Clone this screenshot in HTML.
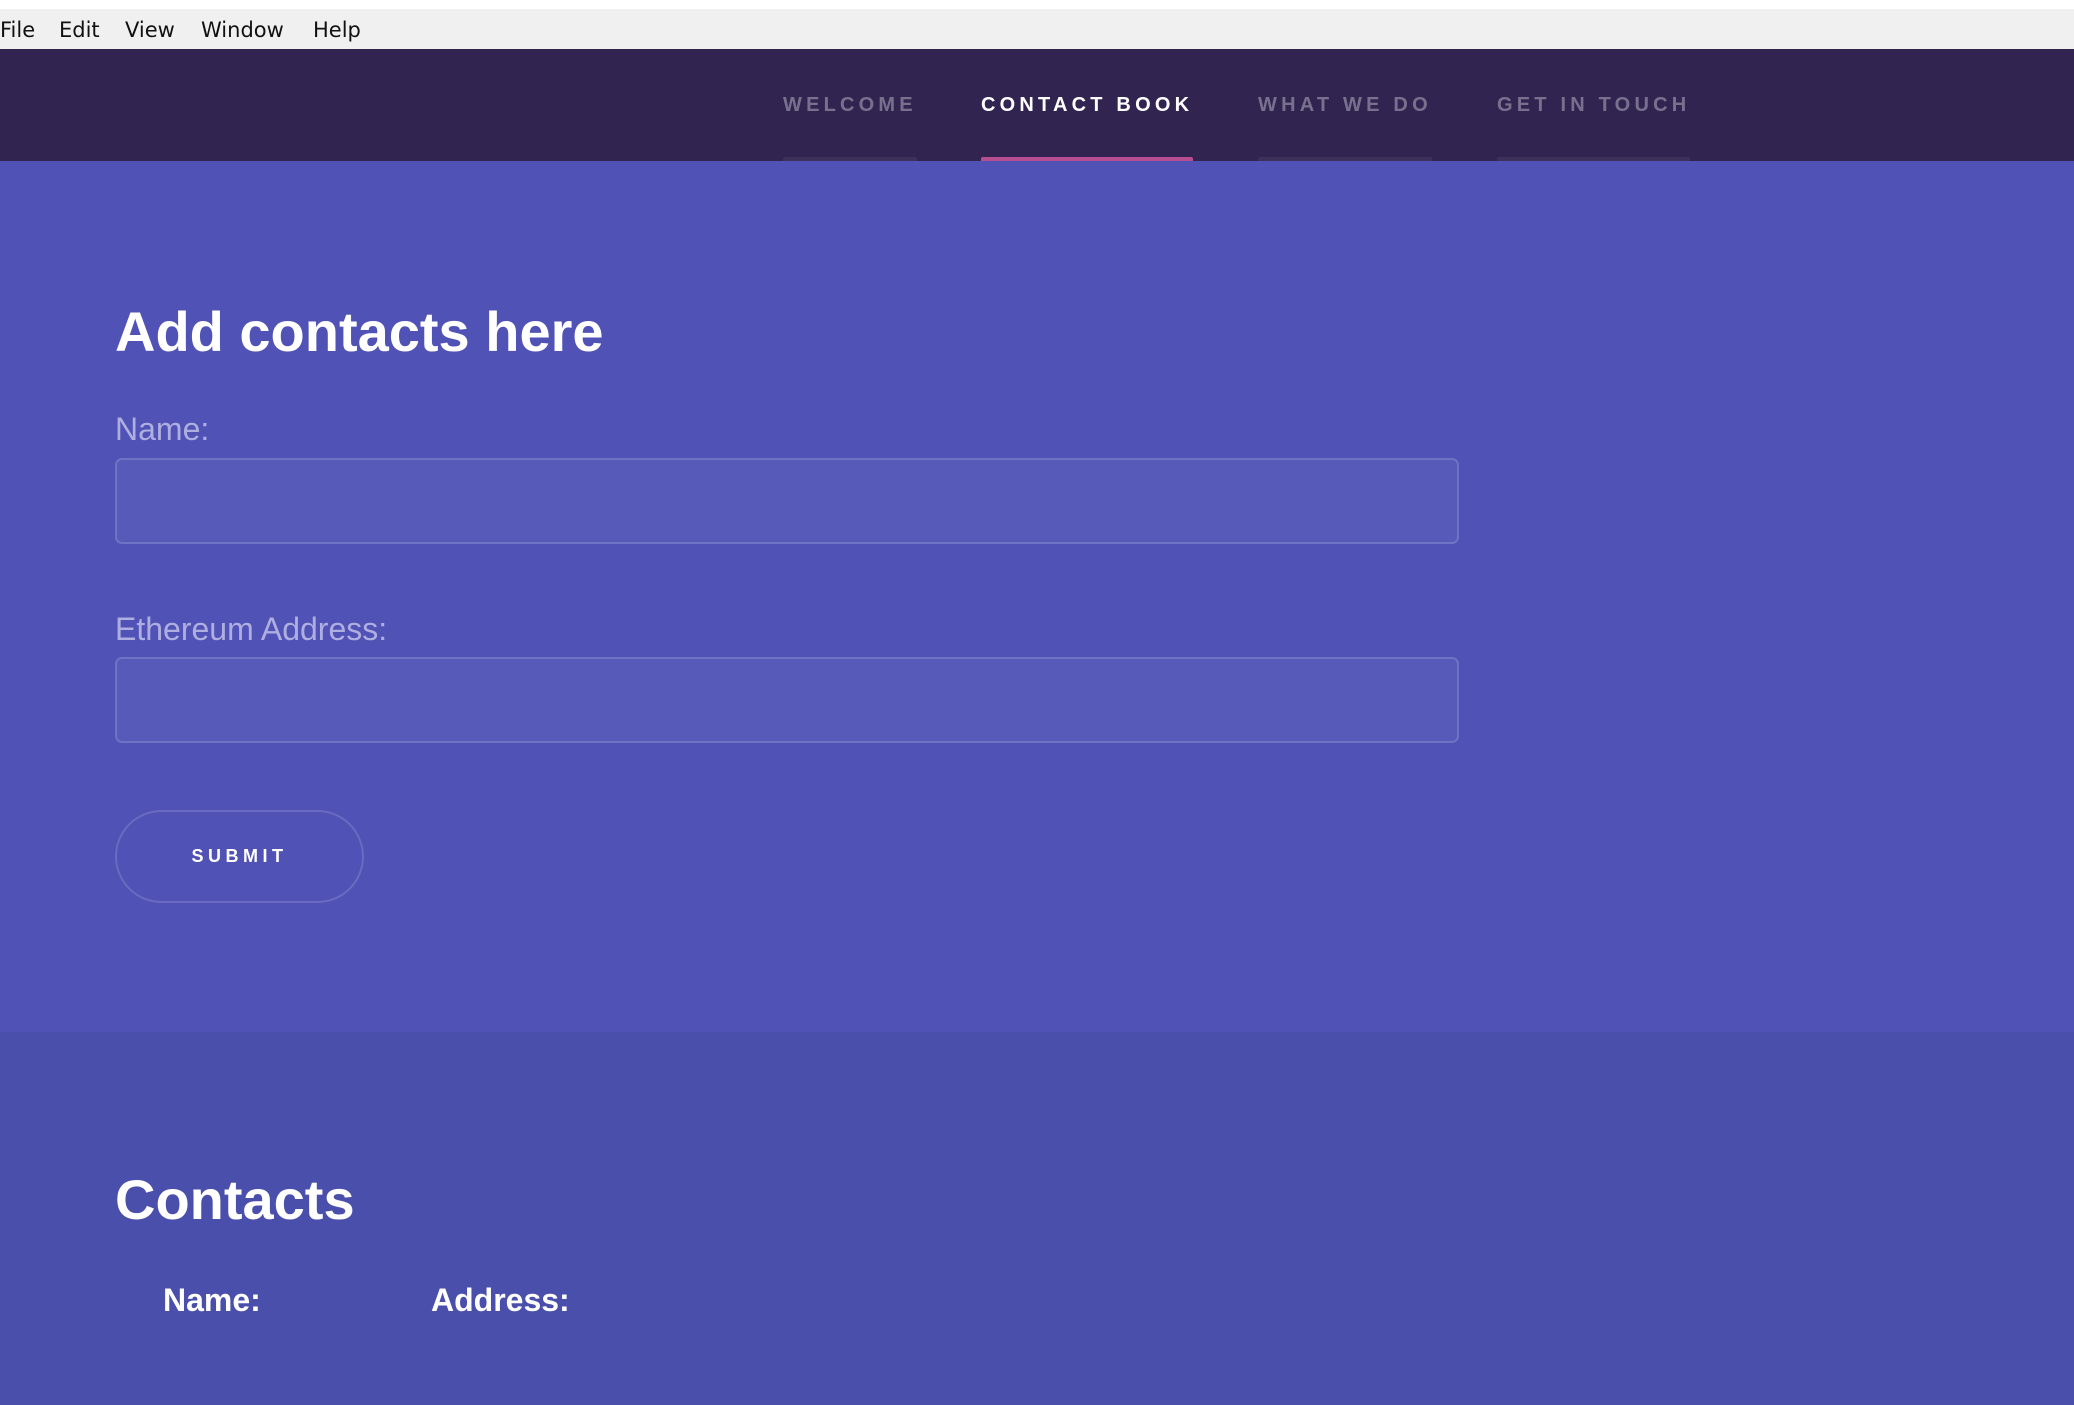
<!DOCTYPE html>
<html><head><meta charset="utf-8"><style>
*{margin:0;padding:0;box-sizing:border-box}
body{width:2074px;height:1405px;overflow:hidden;font-family:"Liberation Sans",Arial,sans-serif;background:#4a4fab;position:relative}
.top{position:absolute;left:0;top:0;width:2074px;height:9px;background:#fff}
.menu{position:absolute;left:0;top:9px;width:2074px;height:40px;background:#f0f0f0}
.menu span{position:absolute;top:9px;color:#111;font-family:"DejaVu Sans","Liberation Sans",sans-serif;font-size:21px}
.nav{position:absolute;left:0;top:49px;width:2074px;height:112px;background:#312450}
.nav a{position:absolute;top:45px;height:67px;font-size:20px;font-weight:bold;letter-spacing:4.2px;color:rgba(255,255,255,.35);text-decoration:none;white-space:nowrap}
.nav a:after{content:"";position:absolute;left:0;right:0;bottom:0;height:4px;background:rgba(255,255,255,.06);border-radius:2px 2px 0 0}
.nav a.act{color:#fff}
.nav a.act:after{background:#b74e91}
.s1{position:absolute;left:0;top:161px;width:2074px;height:871px;background:#5052b5}
h1{position:absolute;left:115px;font-size:56px;font-weight:bold;color:#fff;line-height:1}
.lbl{position:absolute;left:115px;font-size:32px;color:#aeaee0;line-height:1}
.inp{position:absolute;left:115px;width:1344px;height:86px;background:#575ab9;border:2px solid rgba(255,255,255,.15);border-radius:7px}
.btn{position:absolute;left:115px;top:810px;width:249px;height:93px;border:2px solid rgba(255,255,255,.15);border-radius:47px;color:#fff;font-size:18px;font-weight:bold;letter-spacing:4.5px;text-align:center;line-height:89px;padding-left:0}
.th{position:absolute;top:1284px;font-size:32px;font-weight:bold;color:#fff;line-height:1}
</style></head><body>
<div class="top"></div>
<div class="menu"><span style="left:0">File</span><span style="left:59px">Edit</span><span style="left:125px">View</span><span style="left:201px">Window</span><span style="left:313px">Help</span></div>
<div class="nav">
<a style="left:783px">WELCOME</a>
<a class="act" style="left:981px">CONTACT BOOK</a>
<a style="left:1258px">WHAT WE DO</a>
<a style="left:1497px">GET IN TOUCH</a>
</div>
<div class="s1">
<h1 style="top:143px">Add contacts here</h1>
<div class="lbl" style="top:252px">Name:</div>
<div class="inp" style="top:297px"></div>
<div class="lbl" style="top:452px">Ethereum Address:</div>
<div class="inp" style="top:496px"></div>
<div class="btn" style="top:649px">SUBMIT</div>
</div>
<h1 style="top:1172px">Contacts</h1>
<div class="th" style="left:163px">Name:</div>
<div class="th" style="left:431px">Address:</div>
</body></html>
